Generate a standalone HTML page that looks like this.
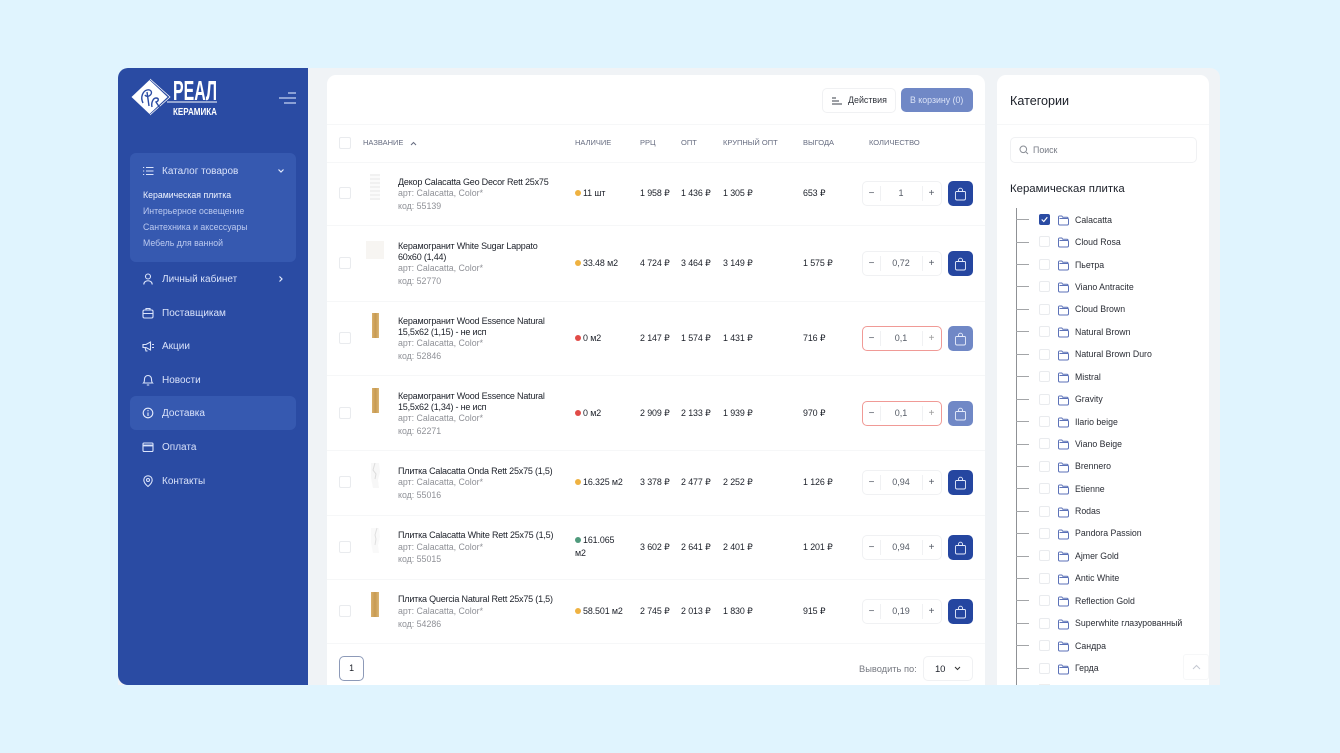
<!DOCTYPE html>
<html lang="ru"><head><meta charset="utf-8"><title>Реал Керамика</title>
<style>
html,body{margin:0;padding:0;width:1340px;height:753px;overflow:hidden;background:#e0f4fe;font-family:"Liberation Sans","DejaVu Sans",sans-serif}
div,span,svg{position:absolute;box-sizing:border-box}
.t{white-space:nowrap;line-height:12px;font-size:9px;color:#1c2029}
.n{font-size:9px;letter-spacing:-.2px;color:#1c2029}
.g{font-size:8.8px;color:#8f9197}
.h{font-size:7.5px;color:#666c80}
.p{font-size:8.9px;letter-spacing:-.1px;color:#1c2029}
.m{font-size:10px;color:#d9e2fa;margin-top:1px}
.s{font-size:8.75px;color:#bccaf0}
.c{font-size:8.75px;color:#2a2d35}
.cb{width:12px;height:12px;border:1px solid #e9ebee;border-radius:2px;background:#fff;left:339px}
.cc{width:11px;height:11px;border:1px solid #e9ebee;border-radius:2px;background:#fff;left:1039px}
.l{left:327px;width:658px;height:1px;background:#f6f7f8}
.d{width:6px;height:6px;border-radius:50%;left:575px}
.q{left:862px;width:80px;height:25px;border:1px solid #f0f1f3;border-radius:5px;background:#fff}
.q.r{border-color:#f09a96}
.q i{position:absolute;top:4px;width:1px;height:15px;background:#f0f1f3}
.q b{position:absolute;top:0;font-weight:400;line-height:23px;text-align:center;color:#555b66}
.b{left:948px;width:25px;height:25px;border-radius:5px;background:#2546a0}
.b.o{background:#7088c6}
.b svg{left:6px;top:6px}
.hl{left:1016px;width:13px;height:1px;background:#a3a5a8}
.f{left:1058px}
.mi{left:142px}
</style></head><body>
<svg width="0" height="0" style="left:0;top:0"><defs>
<symbol id="bag" viewBox="0 0 13 14"><path d="M2.500 4.500h8a1 1 0 0 1 1 1v6a1.500 1.500 0 0 1-1.500 1.500H3a1.500 1.500 0 0 1-1.500-1.500v-6a1 1 0 0 1 1-1zM4.500 4.500V3.200a2 2 0 0 1 4 0v1.300" fill="none" stroke="#e6ecfb" stroke-width=".9"/></symbol>
<symbol id="fo" viewBox="0 0 11 11"><path d="M1.500 3.500h8a1 1 0 0 1 1 1v4.300a1.200 1.200 0 0 1-1.200 1.200H1.700A1.200 1.200 0 0 1 .5 8.800V2a1 1 0 0 1 1-1h2.300l1 1.300h4.200a1 1 0 0 1 1 1" fill="none" stroke="#5c72b8" stroke-width="1"/></symbol>
</defs></svg>

<!-- shell -->
<div style="left:118px;top:68px;width:1102px;height:617px;background:#f0f3f6;border-radius:10px 10px 0 0"></div>
<div style="left:118px;top:68px;width:190px;height:617px;background:#2a4ba3;border-radius:10px 0 0 10px"></div>

<!-- logo -->
<svg style="left:128px;top:76px" width="92" height="42" viewBox="0 0 92 42">
<path d="M21.500 4 39.500 21 21.500 38 3.500 21z" fill="#fff"/>
<path d="M22 3 42 21 22 39" fill="none" stroke="#fff" stroke-width=".8"/>
<path d="M15 27c-3-6 0-12 4-13 5-1 6 4 2 6-3 1-4-1-4-1M19 16l2 14M24 31c-1-4 1-9 4-9 3 0 3 3 0 4l4 6" fill="none" stroke="#2a4ba3" stroke-width="1.400"/>
<text x="45" y="24" textLength="44" lengthAdjust="spacingAndGlyphs" font-family="Liberation Sans" font-weight="700" font-size="28" fill="#fff">РЕАЛ</text>
<path d="M39 26H89" stroke="#fff" stroke-width="1"/>
<text x="45" y="39" textLength="44" lengthAdjust="spacingAndGlyphs" font-family="Liberation Sans" font-weight="700" font-size="10" fill="#fff">КЕРАМИКА</text>
</svg>
<svg style="left:279px;top:92px" width="17" height="13"><path d="M9 1h8M0 6h17M5 11h12" stroke="#c5d2f3" stroke-width="1.200"/></svg>

<!-- nav -->
<div style="left:130px;top:153px;width:166px;height:109px;background:#3659b0;border-radius:6px"></div>
<div style="left:130px;top:396px;width:166px;height:34px;background:#3659b0;border-radius:6px"></div>
<svg class="mi" style="top:165px" width="12" height="12" fill="none" stroke="#dbe4fb" stroke-width="1.100"><path d="M4 2.500h7.500M4 6h7.500M4 9.500h7.500M1 2.500h1.200M1 6h1.200M1 9.500h1.200"/></svg>
<div class="t m" style="left:162px;top:165px">Каталог товаров</div>
<svg style="left:277px;top:168px" width="8" height="6" fill="none" stroke="#e2e9fc" stroke-width="1.200"><path d="M1.500 1.500 4 4l2.500-2.500"/></svg>
<div class="t s" style="left:143px;top:189px;color:#f0f4ff">Керамическая плитка</div>
<div class="t s" style="left:143px;top:205px">Интерьерное освещение</div>
<div class="t s" style="left:143px;top:221px">Сантехника и аксессуары</div>
<div class="t s" style="left:143px;top:237px">Мебель для ванной</div>

<svg class="mi" style="top:273px" width="12" height="12" fill="none" stroke="#dbe4fb" stroke-width="1.100"><circle cx="6" cy="3.500" r="2.500"/><path d="M1.800 11.500c0-5 8.400-5 8.400 0"/></svg>
<div class="t m" style="left:162px;top:273px">Личный кабинет</div>
<svg style="left:278px;top:275px" width="6" height="8" fill="none" stroke="#e2e9fc" stroke-width="1.200"><path d="M1.500 1.500 4 4 1.500 6.500"/></svg>

<svg class="mi" style="top:307px" width="12" height="12" fill="none" stroke="#dbe4fb" stroke-width="1.100"><rect x="1" y="3" width="10" height="8" rx="1.500"/><path d="M4 3V1.500h4V3M1 6.500h10"/></svg>
<div class="t m" style="left:162px;top:307px">Поставщикам</div>

<svg class="mi" style="top:340px" width="12" height="12" fill="none" stroke="#dbe4fb" stroke-width="1.100"><path d="M1 4.500h3L8.500 2v8L4 7.500H1zM3 7.500 4 11h1.500M10 4.500h2M10 7.500h2"/></svg>
<div class="t m" style="left:162px;top:340px">Акции</div>

<svg class="mi" style="top:374px" width="12" height="12" fill="none" stroke="#dbe4fb" stroke-width="1.100"><path d="M1.500 9c1-1 1-2 1-4a3.500 3.500 0 0 1 7 0c0 2 0 3 1 4zM4.800 11h2.400"/></svg>
<div class="t m" style="left:162px;top:374px">Новости</div>

<svg class="mi" style="top:407px" width="12" height="12" fill="none" stroke="#e6ecfd" stroke-width="1.100"><circle cx="6" cy="6" r="4.800"/><path d="M6 5.500V9M6 3v1.200"/></svg>
<div class="t m" style="left:162px;top:407px">Доставка</div>

<svg class="mi" style="top:441px" width="12" height="12" fill="none" stroke="#dbe4fb" stroke-width="1.100"><rect x="1" y="2" width="10" height="8.500" rx="1"/><path d="M1 4.500h10" stroke-width="1.800"/></svg>
<div class="t m" style="left:162px;top:441px">Оплата</div>

<svg class="mi" style="top:475px" width="12" height="12" fill="none" stroke="#dbe4fb" stroke-width="1.100"><path d="M6 11.500C3 9 1.800 7 1.800 5a4.200 4.200 0 0 1 8.400 0c0 2-1.200 4-4.200 6.500z"/><circle cx="6" cy="5" r="1.500"/></svg>
<div class="t m" style="left:162px;top:475px">Контакты</div>

<!-- main card -->
<div style="left:327px;top:75px;width:658px;height:610px;background:#fff;border-radius:9px 9px 0 0"></div>
<div class="l" style="top:124px"></div>
<div class="l" style="top:162px"></div>
<div class="l" style="top:225px"></div>
<div class="l" style="top:301px"></div>
<div class="l" style="top:375px"></div>
<div class="l" style="top:450px"></div>
<div class="l" style="top:515px"></div>
<div class="l" style="top:579px"></div>
<div class="l" style="top:643px"></div>

<div style="left:822px;top:88px;width:74px;height:25px;border:1px solid #f0f1f3;border-radius:5px;background:#fff"></div>
<svg style="left:832px;top:97px" width="10" height="9" fill="none" stroke="#3a3f4a" stroke-width="1"><path d="M0 1h4M0 4h7M0 7h10"/></svg>
<div class="t" style="left:848px;top:94px;font-size:8.9px;color:#30343d">Действия</div>
<div style="left:901px;top:88px;width:72px;height:24px;background:#7088c6;border-radius:5px"></div>
<div class="t" style="left:910px;top:94px;font-size:8.8px;color:#dbe3f7">В корзину (0)</div>

<!-- head -->
<div class="cb" style="top:137px"></div>
<div class="t h" style="left:363px;top:137px">НАЗВАНИЕ</div>
<svg style="left:410px;top:141px" width="7" height="5" fill="none" stroke="#666c80"><path d="M1 4 3.500 1.500 6 4"/></svg>
<div class="t h" style="left:575px;top:137px">НАЛИЧИЕ</div>
<div class="t h" style="left:640px;top:137px">РРЦ</div>
<div class="t h" style="left:681px;top:137px">ОПТ</div>
<div class="t h" style="left:723px;top:137px">КРУПНЫЙ ОПТ</div>
<div class="t h" style="left:803px;top:137px">ВЫГОДА</div>
<div class="t h" style="left:869px;top:137px">КОЛИЧЕСТВО</div>

<!-- row 1 -->
<div class="cb" style="top:187px"></div>
<div style="left:370px;top:174px;width:10px;height:26px;background:repeating-linear-gradient(0deg,#f1f1f1 0 2px,#fbfbfb 2px 4px)"></div>
<div class="t n" style="left:398px;top:176px">Декор Calacatta Geo Decor Rett 25x75</div>
<div class="t g" style="left:398px;top:187px">арт: Calacatta, Color*</div>
<div class="t g" style="left:398px;top:200px">код: 55139</div>
<div class="d" style="top:190px;background:#efb241"></div>
<div class="t p" style="left:583px;top:187px">11 шт</div>
<div class="t p" style="left:640px;top:187px">1 958 ₽</div><div class="t p" style="left:681px;top:187px">1 436 ₽</div><div class="t p" style="left:723px;top:187px">1 305 ₽</div><div class="t p" style="left:803px;top:187px">653 ₽</div>
<div class="q" style="top:181px"><i style="left:17px"></i><i style="left:59px"></i><b style="left:0;width:17px;font-size:10px">−</b><b style="left:17px;width:42px;font-size:9px">1</b><b style="left:59px;width:19px;font-size:10px">+</b></div>
<div class="b" style="top:181px"><svg width="13" height="14"><use href="#bag"/></svg></div>

<!-- row 2 -->
<div class="cb" style="top:257px"></div>
<div style="left:366px;top:241px;width:18px;height:18px;background:#f7f5f2"></div>
<div class="t n" style="left:398px;top:240px">Керамогранит White Sugar Lappato</div>
<div class="t n" style="left:398px;top:251px">60x60 (1,44)</div>
<div class="t g" style="left:398px;top:262px">арт: Calacatta, Color*</div>
<div class="t g" style="left:398px;top:275px">код: 52770</div>
<div class="d" style="top:260px;background:#efb241"></div>
<div class="t p" style="left:583px;top:257px">33.48 м2</div>
<div class="t p" style="left:640px;top:257px">4 724 ₽</div><div class="t p" style="left:681px;top:257px">3 464 ₽</div><div class="t p" style="left:723px;top:257px">3 149 ₽</div><div class="t p" style="left:803px;top:257px">1 575 ₽</div>
<div class="q" style="top:251px"><i style="left:17px"></i><i style="left:59px"></i><b style="left:0;width:17px;font-size:10px">−</b><b style="left:17px;width:42px;font-size:9px">0,72</b><b style="left:59px;width:19px;font-size:10px">+</b></div>
<div class="b" style="top:251px"><svg width="13" height="14"><use href="#bag"/></svg></div>

<!-- row 3 -->
<div class="cb" style="top:332px"></div>
<div style="left:372px;top:313px;width:7px;height:25px;background:linear-gradient(90deg,#d9b06c,#c79a52 50%,#dbb675)"></div>
<div class="t n" style="left:398px;top:315px">Керамогранит Wood Essence Natural</div>
<div class="t n" style="left:398px;top:326px">15,5x62 (1,15) - не исп</div>
<div class="t g" style="left:398px;top:337px">арт: Calacatta, Color*</div>
<div class="t g" style="left:398px;top:350px">код: 52846</div>
<div class="d" style="top:335px;background:#e14b47"></div>
<div class="t p" style="left:583px;top:332px">0 м2</div>
<div class="t p" style="left:640px;top:332px">2 147 ₽</div><div class="t p" style="left:681px;top:332px">1 574 ₽</div><div class="t p" style="left:723px;top:332px">1 431 ₽</div><div class="t p" style="left:803px;top:332px">716 ₽</div>
<div class="q r" style="top:326px"><i style="left:17px"></i><i style="left:59px"></i><b style="left:0;width:17px;font-size:10px">−</b><b style="left:17px;width:42px;font-size:9px">0,1</b><b style="left:59px;width:19px;font-size:10px;color:#999">+</b></div>
<div class="b o" style="top:326px"><svg width="13" height="14"><use href="#bag"/></svg></div>

<!-- row 4 -->
<div class="cb" style="top:407px"></div>
<div style="left:372px;top:388px;width:7px;height:25px;background:linear-gradient(90deg,#d9b06c,#c79a52 50%,#dbb675)"></div>
<div class="t n" style="left:398px;top:390px">Керамогранит Wood Essence Natural</div>
<div class="t n" style="left:398px;top:401px">15,5x62 (1,34) - не исп</div>
<div class="t g" style="left:398px;top:412px">арт: Calacatta, Color*</div>
<div class="t g" style="left:398px;top:425px">код: 62271</div>
<div class="d" style="top:410px;background:#e14b47"></div>
<div class="t p" style="left:583px;top:407px">0 м2</div>
<div class="t p" style="left:640px;top:407px">2 909 ₽</div><div class="t p" style="left:681px;top:407px">2 133 ₽</div><div class="t p" style="left:723px;top:407px">1 939 ₽</div><div class="t p" style="left:803px;top:407px">970 ₽</div>
<div class="q r" style="top:401px"><i style="left:17px"></i><i style="left:59px"></i><b style="left:0;width:17px;font-size:10px">−</b><b style="left:17px;width:42px;font-size:9px">0,1</b><b style="left:59px;width:19px;font-size:10px;color:#999">+</b></div>
<div class="b o" style="top:401px"><svg width="13" height="14"><use href="#bag"/></svg></div>

<!-- row 5 -->
<div class="cb" style="top:476px"></div>
<svg style="left:370px;top:462px" width="11" height="26"><path d="M1 1h8l1 9-2 8 1 8H3L1 16z" fill="#f7f7f7"/><path d="M5 1 3 8l3 4-1 5" fill="none" stroke="#dcdcdc"/></svg>
<div class="t n" style="left:398px;top:465px">Плитка Calacatta Onda Rett 25x75 (1,5)</div>
<div class="t g" style="left:398px;top:476px">арт: Calacatta, Color*</div>
<div class="t g" style="left:398px;top:489px">код: 55016</div>
<div class="d" style="top:479px;background:#efb241"></div>
<div class="t p" style="left:583px;top:476px">16.325 м2</div>
<div class="t p" style="left:640px;top:476px">3 378 ₽</div><div class="t p" style="left:681px;top:476px">2 477 ₽</div><div class="t p" style="left:723px;top:476px">2 252 ₽</div><div class="t p" style="left:803px;top:476px">1 126 ₽</div>
<div class="q" style="top:470px"><i style="left:17px"></i><i style="left:59px"></i><b style="left:0;width:17px;font-size:10px">−</b><b style="left:17px;width:42px;font-size:9px">0,94</b><b style="left:59px;width:19px;font-size:10px">+</b></div>
<div class="b" style="top:470px"><svg width="13" height="14"><use href="#bag"/></svg></div>

<!-- row 6 -->
<div class="cb" style="top:541px"></div>
<svg style="left:370px;top:527px" width="11" height="26"><path d="M1 1h8l1 9-2 8 1 8H3L1 16z" fill="#f9f9f9"/><path d="M7 1 5 8l1 4-1 6" fill="none" stroke="#dfdfdf"/></svg>
<div class="t n" style="left:398px;top:529px">Плитка Calacatta White Rett 25x75 (1,5)</div>
<div class="t g" style="left:398px;top:541px">арт: Calacatta, Color*</div>
<div class="t g" style="left:398px;top:553px">код: 55015</div>
<div class="d" style="top:537px;background:#4f9a7c"></div>
<div class="t p" style="left:583px;top:534px">161.065</div>
<div class="t p" style="left:575px;top:547px">м2</div>
<div class="t p" style="left:640px;top:541px">3 602 ₽</div><div class="t p" style="left:681px;top:541px">2 641 ₽</div><div class="t p" style="left:723px;top:541px">2 401 ₽</div><div class="t p" style="left:803px;top:541px">1 201 ₽</div>
<div class="q" style="top:535px"><i style="left:17px"></i><i style="left:59px"></i><b style="left:0;width:17px;font-size:10px">−</b><b style="left:17px;width:42px;font-size:9px">0,94</b><b style="left:59px;width:19px;font-size:10px">+</b></div>
<div class="b" style="top:535px"><svg width="13" height="14"><use href="#bag"/></svg></div>

<!-- row 7 -->
<div class="cb" style="top:605px"></div>
<div style="left:371px;top:592px;width:8px;height:25px;background:linear-gradient(90deg,#d9b06c,#c79a52 50%,#dbb675)"></div>
<div class="t n" style="left:398px;top:593px">Плитка Quercia Natural Rett 25x75 (1,5)</div>
<div class="t g" style="left:398px;top:605px">арт: Calacatta, Color*</div>
<div class="t g" style="left:398px;top:618px">код: 54286</div>
<div class="d" style="top:608px;background:#efb241"></div>
<div class="t p" style="left:583px;top:605px">58.501 м2</div>
<div class="t p" style="left:640px;top:605px">2 745 ₽</div><div class="t p" style="left:681px;top:605px">2 013 ₽</div><div class="t p" style="left:723px;top:605px">1 830 ₽</div><div class="t p" style="left:803px;top:605px">915 ₽</div>
<div class="q" style="top:599px"><i style="left:17px"></i><i style="left:59px"></i><b style="left:0;width:17px;font-size:10px">−</b><b style="left:17px;width:42px;font-size:9px">0,19</b><b style="left:59px;width:19px;font-size:10px">+</b></div>
<div class="b" style="top:599px"><svg width="13" height="14"><use href="#bag"/></svg></div>

<!-- footer -->
<div style="left:339px;top:656px;width:25px;height:25px;border:1px solid #8d9ab8;border-radius:5px;background:#fff"></div>
<div class="t p" style="left:339px;top:662px;width:25px;text-align:center">1</div>
<div class="t" style="left:859px;top:663px;color:#777a82;font-size:9.300px">Выводить по:</div>
<div style="left:923px;top:656px;width:50px;height:25px;border:1px solid #f0f1f3;border-radius:5px;background:#fff"></div>
<div class="t p" style="left:935px;top:664px;font-size:9.500px">10</div>
<svg style="left:954px;top:666px" width="7" height="5" fill="none" stroke="#333"><path d="M1 1 3.500 3.500 6 1"/></svg>

<!-- right card -->
<div style="left:997px;top:75px;width:212px;height:610px;background:#fff;border-radius:9px 9px 0 0"></div>
<div style="left:997px;top:124px;width:212px;height:1px;background:#f6f7f8"></div>
<div class="t" style="left:1010px;top:95px;font-size:12.600px;color:#1c2029">Категории</div>
<div style="left:1010px;top:137px;width:187px;height:26px;border:1px solid #f0f1f3;border-radius:5px;background:#fff"></div>
<svg style="left:1019px;top:145px" width="10" height="10" fill="none" stroke="#8a8e96"><circle cx="4.300" cy="4.300" r="3.300"/><path d="M7 7l2 2"/></svg>
<div class="t g" style="left:1033px;top:144px;font-size:8.800px;color:#777b85">Поиск</div>
<div class="t" style="left:1010px;top:183px;font-size:11.400px;color:#1c2029">Керамическая плитка</div>

<!-- tree -->
<div style="left:1016px;top:208px;width:1px;height:477px;background:#8f9195"></div>
<div class="hl" style="top:219px"></div><div style="left:1039px;top:214px;width:11px;height:11px;border-radius:2px;background:#2a4ba3"></div>
<svg style="left:1041px;top:216px" width="7" height="7" fill="none" stroke="#fff" stroke-width="1.200"><path d="M.7 3.500 2.800 5.500 6.300 1.300"/></svg>
<svg class="f" style="top:215px" width="11" height="11"><use href="#fo"/></svg><div class="t c" style="left:1075px;top:214px">Calacatta</div>
<div class="hl" style="top:242px"></div><div class="cc" style="top:236px"></div><svg class="f" style="top:237px" width="11" height="11"><use href="#fo"/></svg><div class="t c" style="left:1075px;top:236px">Cloud Rosa</div>
<div class="hl" style="top:264px"></div><div class="cc" style="top:259px"></div><svg class="f" style="top:260px" width="11" height="11"><use href="#fo"/></svg><div class="t c" style="left:1075px;top:259px">Пьетра</div>
<div class="hl" style="top:286px"></div><div class="cc" style="top:281px"></div><svg class="f" style="top:282px" width="11" height="11"><use href="#fo"/></svg><div class="t c" style="left:1075px;top:281px">Viano Antracite</div>
<div class="hl" style="top:309px"></div><div class="cc" style="top:304px"></div><svg class="f" style="top:305px" width="11" height="11"><use href="#fo"/></svg><div class="t c" style="left:1075px;top:303px">Cloud Brown</div>
<div class="hl" style="top:331px"></div><div class="cc" style="top:326px"></div><svg class="f" style="top:327px" width="11" height="11"><use href="#fo"/></svg><div class="t c" style="left:1075px;top:326px">Natural Brown</div>
<div class="hl" style="top:354px"></div><div class="cc" style="top:349px"></div><svg class="f" style="top:350px" width="11" height="11"><use href="#fo"/></svg><div class="t c" style="left:1075px;top:348px">Natural Brown Duro</div>
<div class="hl" style="top:376px"></div><div class="cc" style="top:371px"></div><svg class="f" style="top:372px" width="11" height="11"><use href="#fo"/></svg><div class="t c" style="left:1075px;top:371px">Mistral</div>
<div class="hl" style="top:399px"></div><div class="cc" style="top:394px"></div><svg class="f" style="top:395px" width="11" height="11"><use href="#fo"/></svg><div class="t c" style="left:1075px;top:393px">Gravity</div>
<div class="hl" style="top:421px"></div><div class="cc" style="top:416px"></div><svg class="f" style="top:417px" width="11" height="11"><use href="#fo"/></svg><div class="t c" style="left:1075px;top:416px">Ilario beige</div>
<div class="hl" style="top:444px"></div><div class="cc" style="top:438px"></div><svg class="f" style="top:439px" width="11" height="11"><use href="#fo"/></svg><div class="t c" style="left:1075px;top:438px">Viano Beige</div>
<div class="hl" style="top:466px"></div><div class="cc" style="top:461px"></div><svg class="f" style="top:462px" width="11" height="11"><use href="#fo"/></svg><div class="t c" style="left:1075px;top:460px">Brennero</div>
<div class="hl" style="top:488px"></div><div class="cc" style="top:483px"></div><svg class="f" style="top:484px" width="11" height="11"><use href="#fo"/></svg><div class="t c" style="left:1075px;top:483px">Etienne</div>
<div class="hl" style="top:511px"></div><div class="cc" style="top:506px"></div><svg class="f" style="top:507px" width="11" height="11"><use href="#fo"/></svg><div class="t c" style="left:1075px;top:505px">Rodas</div>
<div class="hl" style="top:533px"></div><div class="cc" style="top:528px"></div><svg class="f" style="top:529px" width="11" height="11"><use href="#fo"/></svg><div class="t c" style="left:1075px;top:527px">Pandora Passion</div>
<div class="hl" style="top:556px"></div><div class="cc" style="top:550px"></div><svg class="f" style="top:551px" width="11" height="11"><use href="#fo"/></svg><div class="t c" style="left:1075px;top:550px">Ajmer Gold</div>
<div class="hl" style="top:578px"></div><div class="cc" style="top:573px"></div><svg class="f" style="top:574px" width="11" height="11"><use href="#fo"/></svg><div class="t c" style="left:1075px;top:572px">Antic White</div>
<div class="hl" style="top:600px"></div><div class="cc" style="top:595px"></div><svg class="f" style="top:596px" width="11" height="11"><use href="#fo"/></svg><div class="t c" style="left:1075px;top:595px">Reflection Gold</div>
<div class="hl" style="top:623px"></div><div class="cc" style="top:618px"></div><svg class="f" style="top:619px" width="11" height="11"><use href="#fo"/></svg><div class="t c" style="left:1075px;top:617px">Superwhite глазурованный</div>
<div class="hl" style="top:645px"></div><div class="cc" style="top:640px"></div><svg class="f" style="top:641px" width="11" height="11"><use href="#fo"/></svg><div class="t c" style="left:1075px;top:640px">Сандра</div>
<div class="hl" style="top:668px"></div><div class="cc" style="top:663px"></div><svg class="f" style="top:664px" width="11" height="11"><use href="#fo"/></svg><div class="t c" style="left:1075px;top:662px">Герда</div>
<div style="left:1039px;top:684px;width:11px;height:1px;background:#eee"></div>

<!-- scroll top -->
<div style="left:1183px;top:654px;width:26px;height:26px;background:#fff;border:1px solid #f6f7f8;border-radius:3px"></div>
<svg style="left:1192px;top:664px" width="9" height="6" fill="none" stroke="#c4c9d2"><path d="M1 5 4.500 1.500 8 5"/></svg>
</body></html>
